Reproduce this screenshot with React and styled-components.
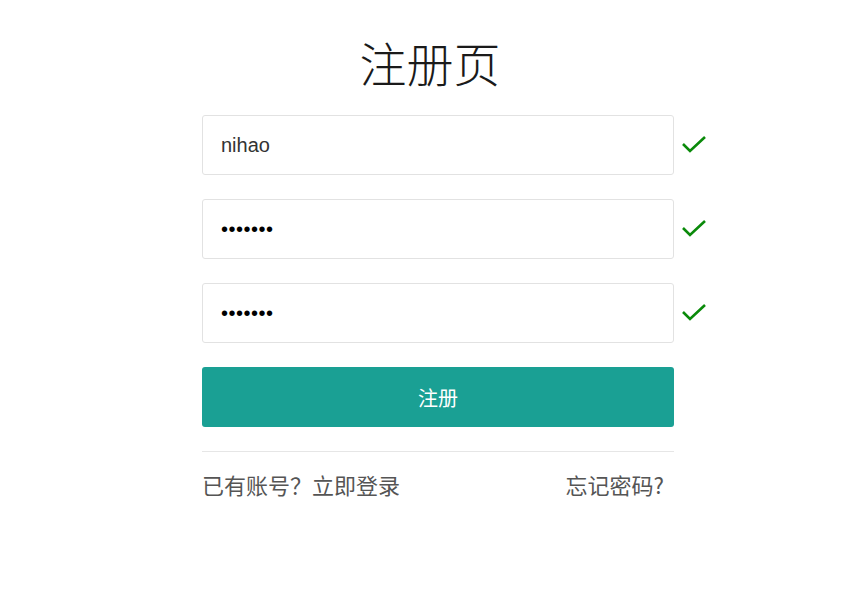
import React from 'react';
import styled, { createGlobalStyle } from 'styled-components';

const GlobalStyle = createGlobalStyle`
  body {
    margin: 0;
    background: #fff;
    font-family: "Microsoft YaHei", "Noto Sans CJK SC", "Liberation Sans", sans-serif;
  }
`;

const Page = styled.div`
  display: flex;
  flex-direction: column;
  padding-top: 27px;
`;

const Title = styled.h1`
  margin: 0 0 18px;
  padding-right: 5px;
  text-align: center;
  font-size: 47px;
  font-weight: 300;
  line-height: 70px;
  color: #1a1a1a;
`;

const Form = styled.form`
  display: flex;
  flex-direction: column;
  gap: 24px;
  width: 472px;
  margin-left: 202px;
`;

const Row = styled.div`
  position: relative;
`;

const Input = styled.input`
  box-sizing: border-box;
  width: 100%;
  height: 60px;
  padding: 0 18px;
  border: 1px solid #e2e2e2;
  border-radius: 3px;
  font-size: 20px;
  font-family: "Liberation Sans", Arial, sans-serif;
  color: ${(p) => (p.type === 'password' ? '#000' : '#333')};
  outline: none;
  letter-spacing: ${(p) => (p.type === 'password' ? '0.5px' : '0')};
`;

const Check = styled.svg`
  position: absolute;
  left: 479px;
  top: 19px;
  width: 26px;
  height: 20px;
`;

const Button = styled.button`
  height: 60px;
  border: none;
  border-radius: 3px;
  background: #1aa094;
  color: #fff;
  font-size: 20px;
  font-family: inherit;
`;

const Divider = styled.hr`
  margin: 0;
  border: none;
  border-top: 1px solid #e6e6e6;
`;

const Links = styled.div`
  display: flex;
  justify-content: space-between;
  margin-top: -8px;
  padding-right: 10px;
  font-size: 22px;
  color: #555;
`;

const Link = styled.a`
  color: inherit;
  text-decoration: none;
`;

const Tick = () => (
  <Check viewBox="0 0 26 20">
    <path d="M2 10 L9 17 L24 3" fill="none" stroke="#0a8a0a" strokeWidth="2.6" />
  </Check>
);

export default function App() {
  return (
    <Page>
      <GlobalStyle />
      <Title>注册页</Title>
      <Form onSubmit={(e) => e.preventDefault()}>
        <Row>
          <Input type="text" defaultValue="nihao" />
          <Tick />
        </Row>
        <Row>
          <Input type="password" defaultValue="1234567" />
          <Tick />
        </Row>
        <Row>
          <Input type="password" defaultValue="1234567" />
          <Tick />
        </Row>
        <Button type="submit">注册</Button>
        <Divider />
        <Links>
          <Link href="#">已有账号？立即登录</Link>
          <Link href="#">忘记密码?</Link>
        </Links>
      </Form>
    </Page>
  );
}
